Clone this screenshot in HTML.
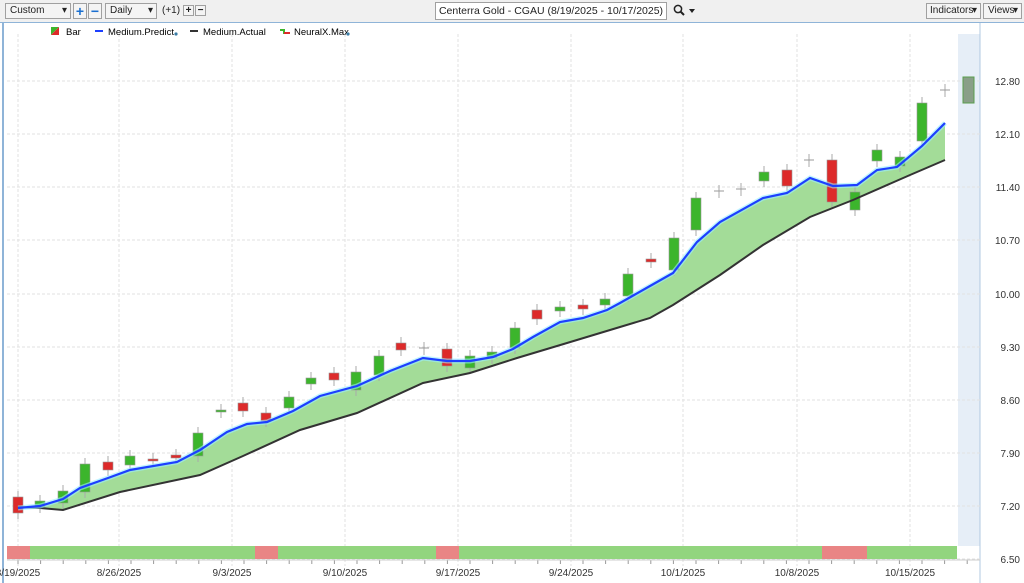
<!DOCTYPE html><html><head><style>
body{margin:0;width:1024px;height:583px;overflow:hidden;background:#fff;font-family:"Liberation Sans",sans-serif;font-size:11px;color:#222}
#tb{position:absolute;left:0;top:0;width:1024px;height:22px;background:#f0f0f0;border-bottom:1px solid #8fb4d8}
.b{position:absolute;top:3px;height:16px;border:1px solid #a0a0a0;background:#f4f4f4;box-sizing:border-box;font-size:10px;line-height:14px;padding-left:4px;white-space:nowrap}
.dd:after{content:"▾";position:absolute;right:3px;top:0;font-size:10px}
svg{position:absolute;left:0;top:0}
</style></head><body>
<div id="tb">
<div class="b dd" style="left:5px;width:66px">Custom</div>
<div class="b" style="left:73px;width:14px;padding:0;text-align:center;color:#1a6fd0;font-weight:bold;font-size:14px">+</div>
<div class="b" style="left:88px;width:14px;padding:0;text-align:center;color:#1a6fd0;font-weight:bold;font-size:14px">−</div>
<div class="b dd" style="left:105px;width:52px">Daily</div>
<div style="position:absolute;left:162px;top:5px;font-size:10px">(+1)</div>
<div class="b" style="left:183px;width:11px;height:11px;top:5px;padding:0;line-height:9px;text-align:center;font-weight:bold">+</div>
<div class="b" style="left:195px;width:11px;height:11px;top:5px;padding:0;line-height:9px;text-align:center;font-weight:bold">−</div>
<div class="b" style="left:435px;width:232px;height:18px;top:2px;background:#fff;font-size:10.5px;line-height:16px;text-align:center;padding:0">Centerra Gold - CGAU (8/19/2025 - 10/17/2025)</div>
<svg style="left:673px;top:4px" width="24" height="14"><circle cx="5" cy="5" r="3.6" fill="none" stroke="#222" stroke-width="1.5"/><line x1="7.5" y1="7.5" x2="11" y2="11" stroke="#222" stroke-width="2"/><polygon points="16,5 22,5 19,9" fill="#222"/></svg>
<div class="b dd" style="left:926px;width:55px;padding-left:3px">Indicators</div>
<div class="b dd" style="left:983px;width:39px">Views</div>
</div>
<svg id="s" width="1024" height="583"></svg>
<script>
const s=document.getElementById('s');let h='';
h+='<line x1="3" y1="23" x2="3" y2="583" stroke="#8fb4d8" stroke-width="2"/>';
h+='<rect x="958" y="34" width="22" height="512" fill="#e6eef7"/>';
h+='<line x1="980" y1="23" x2="980" y2="583" stroke="#b0c8e0"/>';
const pl=[["12.80",81],["12.10",134],["11.40",187],["10.70",240],["10.00",294],["9.30",347],["8.60",400],["7.90",453],["7.20",506],["6.50",559]];
pl.forEach(p=>{h+=`<line x1="7" y1="${p[1]}" x2="980" y2="${p[1]}" stroke="#e2e2e2" stroke-dasharray="3,2"/><text x="1020" y="${p[1]+4}" text-anchor="end" font-size="10" fill="#333">${p[0]}</text>`});
const dl=[["8/19/2025",18],["8/26/2025",119],["9/3/2025",232],["9/10/2025",345],["9/17/2025",458],["9/24/2025",571],["10/1/2025",683],["10/8/2025",797],["10/15/2025",910]];
dl.forEach(d=>{h+=`<line x1="${d[1]}" y1="34" x2="${d[1]}" y2="566" stroke="#e2e2e2" stroke-dasharray="3,2"/><text x="${d[1]}" y="576" text-anchor="middle" font-size="10" fill="#333">${d[0]}</text>`});
for(let i=0;i<43;i++){let x=18+i*22.6;h+=`<line x1="${x}" y1="560" x2="${x}" y2="564" stroke="#999"/>`}
h+='<line x1="7" y1="560" x2="980" y2="560" stroke="#ccc"/>';
const P=[[18,508],[40,506],[63,499],[80,488],[108,478],[130,470],[177,462],[200,450],[227,432],[247,424],[267,422],[293,411],[320,396],[357,386],[390,371],[423,358],[447,361],[470,361],[493,357],[513,349],[533,337],[560,322],[583,318],[607,310],[620,303],[650,286],[673,273],[697,242],[720,222],[763,198],[787,193],[810,178],[833,186],[857,185],[877,170],[897,167],[922,146],[945,123]];
const A=[[18,507],[40,508],[63,510],[120,492],[200,475],[243,456],[300,430],[357,413],[423,383],[470,373],[517,358],[567,343],[620,327],[650,318],[673,305],[720,275],[763,245],[810,217],[853,200],[910,175],[945,160]];
const ps=a=>a.map(p=>p.join(',')).join(' ');
h+=`<polygon points="${ps(P)} ${ps(A.slice().reverse())}" fill="#a3dc98"/>`;
const C=[[18,497,513,'r'],[40,501,507,'g'],[63,491,503,'g'],[85,464,492,'g'],[108,462,470,'r'],[130,456,465,'g'],[153,459,461,'r'],[176,455,458,'r'],[198,433,456,'g'],[221,410,412,'g'],[243,403,411,'r'],[266,413,421,'r'],[289,397,408,'g'],[311,378,384,'g'],[334,373,380,'r'],[356,372,390,'g'],[379,356,375,'g'],[401,343,350,'r'],[424,348,349,'d'],[447,349,366,'r'],[470,356,368,'g'],[492,352,358,'g'],[515,328,348,'g'],[537,310,319,'r'],[560,307,311,'g'],[583,305,309,'r'],[605,299,305,'g'],[628,274,296,'g'],[651,259,262,'r'],[674,238,270,'g'],[696,198,230,'g'],[719,191,192,'d'],[741,189,190,'d'],[764,172,181,'g'],[787,170,186,'r'],[809,160,161,'d'],[832,160,202,'r'],[855,192,210,'g'],[877,150,161,'g'],[900,157,166,'g'],[922,103,141,'g'],[945,90,91,'d']];
C.forEach(c=>{let [x,t,b,k]=c;h+=`<line x1="${x}" y1="${t-6}" x2="${x}" y2="${b+6}" stroke="#aaa"/>`;
if(k=='d')h+=`<line x1="${x-5}" y1="${t}" x2="${x+5}" y2="${t}" stroke="#999"/>`;
else h+=`<rect x="${x-5}" y="${t}" width="10" height="${Math.max(b-t,2)}" fill="${k=='g'?'#3cb52c':'#dd2a2a'}" stroke="#999" stroke-width=".6"/>`});
h+='<rect x="963" y="77" width="11" height="26" fill="#8a9f88" stroke="#5a9e4e"/>';
h+=`<polyline points="${ps(A)}" fill="none" stroke="#333" stroke-width="2"/>`;
h+=`<polyline points="${ps(P)}" fill="none" stroke="#9ef" stroke-width="5" opacity=".6"/><polyline points="${ps(P)}" fill="none" stroke="#1d3fff" stroke-width="2.2"/>`;
h+='<rect x="7" y="546" width="950" height="13" fill="#92d57e"/>';
[[7,30],[255,278],[436,459],[822,867]].forEach(r=>h+=`<rect x="${r[0]}" y="546" width="${r[1]-r[0]}" height="13" fill="#e98585"/>`);
h+='<polygon points="51,27 59,27 51,35" fill="#3cb52c"/><polygon points="59,27 59,35 51,35" fill="#dd2a2a"/><text x="66" y="35" font-size="9.5">Bar</text>';
h+='<line x1="95" y1="31" x2="103" y2="31" stroke="#1d3fff" stroke-width="2"/><text x="108" y="35" font-size="9.5">Medium.Predict</text><circle cx="176" cy="34" r="1.6" fill="#3a7ca5"/>';
h+='<line x1="190" y1="31" x2="198" y2="31" stroke="#333" stroke-width="2"/><text x="203" y="35" font-size="9.5">Medium.Actual</text>';
h+='<polyline points="280,30 284,30 284,33 290,33" fill="none" stroke="#3cb52c" stroke-width="2"/><line x1="284" y1="33" x2="290" y2="33" stroke="#dd2a2a" stroke-width="2"/><text x="294" y="35" font-size="9.5">NeuralX.Max</text><circle cx="348" cy="34" r="1.6" fill="#3a7ca5"/>';
s.innerHTML=h;
</script></body></html>
